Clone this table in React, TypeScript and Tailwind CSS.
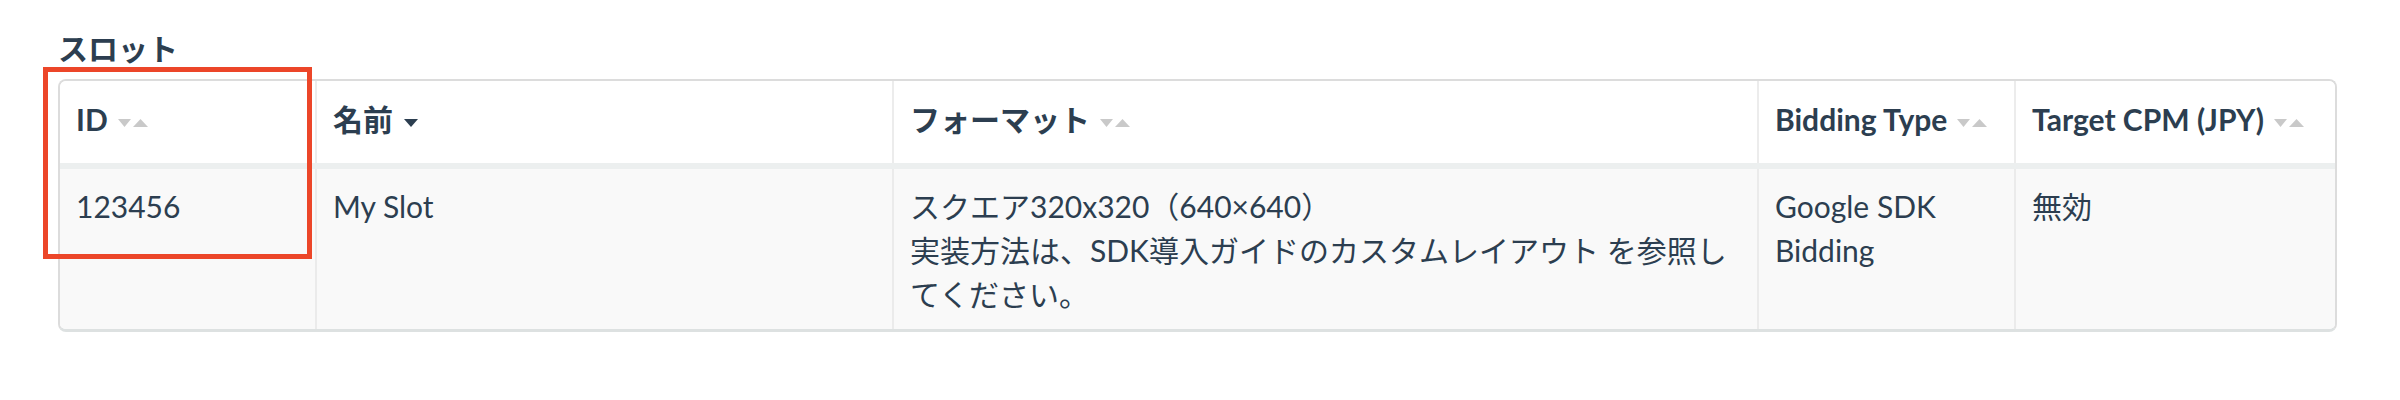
import React from "react";

function SortPair() {
  return (
    <span className="ml-[10px] mt-[9px] inline-flex items-center gap-[2px] shrink-0">
      <svg width="13" height="8" viewBox="0 0 13 8">
        <path d="M0 0H13L6.5 8Z" fill="#c9c9c9" />
      </svg>
      <svg width="15" height="8" viewBox="0 0 15 8">
        <path d="M7.5 0L15 8H0Z" fill="#c9c9c9" />
      </svg>
    </span>
  );
}

function SortDown() {
  return (
    <span className="ml-[11px] mt-[9px] inline-flex items-center shrink-0">
      <svg width="14" height="8" viewBox="0 0 14 8">
        <path d="M0 0H14L7 8Z" fill="#2c3e50" />
      </svg>
    </span>
  );
}

const headCell =
  "h-[82px] flex items-center pl-4 pr-4 pb-[7px] font-bold text-[30px] leading-[44px] whitespace-nowrap";
const bodyCell = "h-[160px] pt-[15px] pl-4 pr-4 text-[30px] leading-[44px]";

export default function App() {
  return (
    <div className="w-[2400px] h-[400px] bg-white pt-[30px] pl-[58px] pr-[63px] text-[#2c3e50] font-['Lato','Noto_Sans_CJK_JP',sans-serif]">
      <h2 className="text-[30px] font-bold leading-[36px]">スロット</h2>
      <div className="relative mt-[13px]">
        <div className="rounded-[8px] border-2 border-b-[3px] border-[#dcdcdc] border-b-[#dde1e1] overflow-hidden bg-white">
          <div className="grid grid-cols-[255px_577px_865px_257px_1fr] bg-white">
            <div className={headCell}>
              <span>ID</span>
              <SortPair />
            </div>
            <div className={headCell + " border-l-2 border-[#ececec]"}>
              <span>名前</span>
              <SortDown />
            </div>
            <div className={headCell + " border-l-2 border-[#ececec]"}>
              <span>フォーマット</span>
              <SortPair />
            </div>
            <div className={headCell + " border-l-2 border-[#ececec]"}>
              <span>Bidding Type</span>
              <SortPair />
            </div>
            <div className={headCell + " border-l-2 border-[#ececec]"}>
              <span>Target CPM (JPY)</span>
              <SortPair />
            </div>
          </div>
          <div className="h-[6px] bg-[#ecefef]" />
          <div className="grid grid-cols-[255px_577px_865px_257px_1fr] bg-[#f9f9f9]">
            <div className={bodyCell}>123456</div>
            <div className={bodyCell + " border-l-2 border-[#ebebeb]"}>My Slot</div>
            <div className={bodyCell + " border-l-2 border-[#ebebeb]"}>
              <div>スクエア320x320（640×640）</div>
              <div>
                実装方法は、SDK導入ガイドのカスタムレイアウト を参照し
                <br />
                てください。
              </div>
            </div>
            <div className={bodyCell + " border-l-2 border-[#ebebeb]"}>Google SDK Bidding</div>
            <div className={bodyCell + " border-l-2 border-[#ebebeb]"}>無効</div>
          </div>
        </div>
        <div className="absolute left-[-15px] top-[-12px] w-[269px] h-[192px] border-[5px] border-[#ec4629] pointer-events-none" />
      </div>
    </div>
  );
}
